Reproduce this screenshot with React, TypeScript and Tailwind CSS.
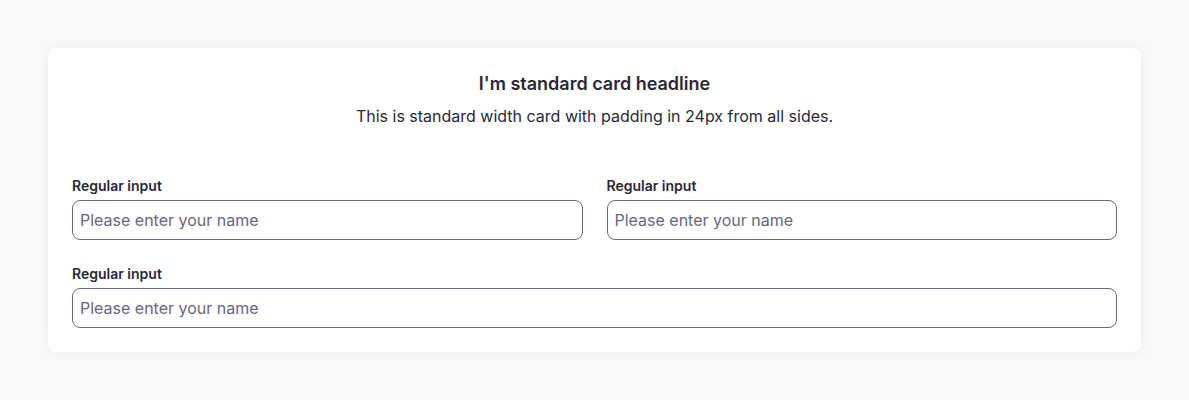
import React from 'react';

function Field({ label }: { label: string }) {
  return (
    <label className="flex flex-col">
      <span className="mb-1 text-[14px] leading-5 font-semibold text-[#2a2838]">{label}</span>
      <input
        type="text"
        placeholder="Please enter your name"
        className="h-10 w-full rounded-lg border border-[#6e6882] bg-white px-[7px] text-[16px] text-[#2a2838] placeholder:text-[#6b6580] outline-none"
      />
    </label>
  );
}

export default function App() {
  return (
    <div
      className="min-h-[400px] bg-[#f9f9f9] px-12 py-12"
      style={{ fontFamily: 'Inter, "Noto Sans", sans-serif' }}
    >
      <div className="rounded-lg bg-white p-6 shadow-[0_0_12px_rgba(0,0,0,0.06)]">
        <div className="mb-12 text-center">
          <h2 className="text-[18px] leading-6 font-semibold text-[#2a2838]">I'm standard card headline</h2>
          <p className="mt-2 text-[16px] leading-6 text-[#2a2838]">
            This is standard width card with padding in 24px from all sides.
          </p>
        </div>
        <div className="grid grid-cols-2 gap-6">
          <Field label="Regular input" />
          <Field label="Regular input" />
          <div className="col-span-2">
            <Field label="Regular input" />
          </div>
        </div>
      </div>
    </div>
  );
}
